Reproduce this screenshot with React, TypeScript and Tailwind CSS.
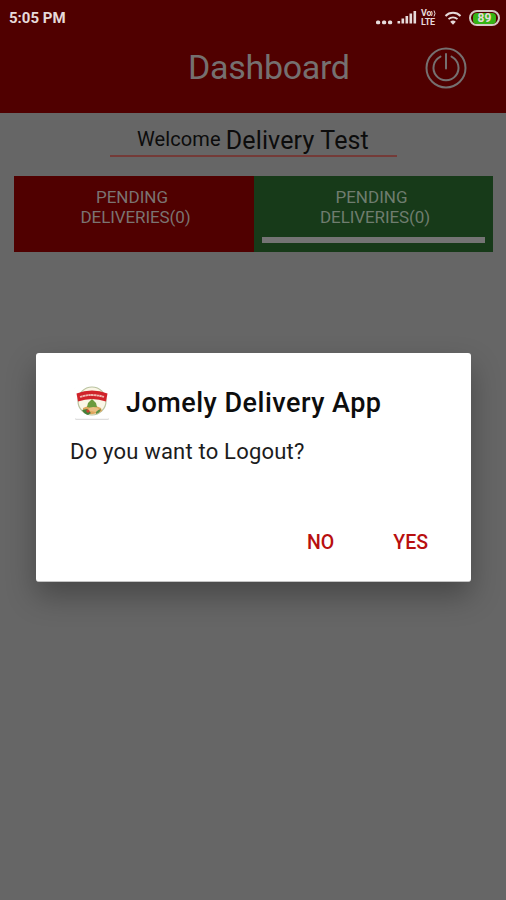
function StatusBar() {
  return (
    <div className="flex h-9 items-center justify-between pl-[9px] pr-[6px] text-[#e6dada]">
      <span className="text-[15px] font-bold leading-none">5:05 PM</span>
      <div className="flex items-center">
        <svg className="h-5 w-[46px]" viewBox="0 0 46 20" fill="currentColor" aria-hidden="true">
          <rect x="1" y="12.500" width="4.200" height="3.800" rx="1.500" />
          <rect x="7" y="12.500" width="4.200" height="3.800" rx="1.500" />
          <rect x="13" y="12.500" width="4.200" height="3.800" rx="1.500" />
          <rect x="22.500" y="13" width="2.600" height="2.500" />
          <rect x="26.500" y="10.500" width="2.600" height="5" />
          <rect x="30.500" y="8" width="2.600" height="7.500" />
          <rect x="34.500" y="5.500" width="2.600" height="10" />
          <rect x="38.500" y="3" width="2.600" height="12.500" />
        </svg>
        <div className="flex w-[19px] flex-col text-[9px] font-bold leading-[9px] tracking-[-0.2px]">
          <span className="flex items-center">
            Vo
            <svg className="h-[7px] w-[5px]" viewBox="0 0 5 7" fill="none" stroke="currentColor" aria-hidden="true">
              <path d="M.5 1q1.500 2.500 0 5M3 .5q2 3 0 6" />
            </svg>
          </span>
          <span>LTE</span>
        </div>
        <svg className="ml-[4px] h-4 w-[18px]" viewBox="0 0 18 16" fill="none" stroke="currentColor" aria-hidden="true">
          <path d="M1.500 6a10.500 10.500 0 0 1 15 0" strokeWidth="2" />
          <path d="M4.500 9.200a6.400 6.400 0 0 1 9 0" strokeWidth="1.800" />
          <path d="M9 14.800l-2.800-3a4 4 0 0 1 5.600 0z" fill="currentColor" stroke="none" />
        </svg>
        <div className="ml-[7px] flex h-4 w-[31px] items-center justify-center rounded-full border-2 border-[#d6c9c6]">
          <span className="flex h-[11px] w-[23px] items-center justify-center rounded-sm bg-[#35b514] text-[12px] font-bold leading-none">
            89
          </span>
        </div>
      </div>
    </div>
  );
}

function PowerIcon() {
  return (
    <svg className="h-[42px] w-[42px]" viewBox="0 0 42 42" fill="none" stroke="currentColor" strokeLinecap="round" aria-hidden="true">
      <circle cx="21" cy="21" r="19.500" strokeWidth="2" />
      <path d="M15.500 9.600a12.500 12.500 0 1 0 11 0" strokeWidth="2" />
      <path d="M21 7v14.500" strokeWidth="2" />
    </svg>
  );
}

function AppLogo() {
  return (
    <svg className="h-[36px] w-[36px]" viewBox="0 0 36 36" aria-hidden="true">
      <rect x="1" y="2" width="34" height="33" rx="1.500" fill="#dedede" />
      <rect x="1" y="1" width="34" height="32.800" rx="1.500" fill="#fff" />
      <circle cx="18" cy="16" r="14" fill="#faf6e6" stroke="#b9c3a0" strokeWidth="1.200" />
      <path d="M9 23q9-5 18 0l1 3q-9 6-19 1z" fill="#dfa75d" />
      <path d="M18 14l4 4 1 4-5 1-5-1 1-4z" fill="#6c9b3e" />
      <path d="M8 25l5-1 4 4-3 2q-4-1-6-5z" fill="#43803a" />
      <path d="M22 26l5-2q-1 4-5 5z" fill="#5a9145" />
      <circle cx="14" cy="26" r="1.700" fill="#c9442f" />
      <path d="M14 24q5-4 11 0l-3 3-6-1z" fill="#eabf83" />
      <path d="M2.500 8.500q15.500-6 31 0l-1.500 8q-14-5-28 0z" fill="#d0232a" />
      <path d="M6 12q12-4 24 0" fill="none" stroke="#f0b9b2" strokeWidth="1.800" strokeDasharray="2.500 .3" />
    </svg>
  );
}

export default function App() {
  return (
    <div className="relative h-[900px] w-[506px] overflow-hidden bg-[#666666] font-['Roboto',sans-serif]">
      <header className="h-[113px] bg-[#500000]">
        <StatusBar />
        <div className="flex h-[64px] items-center justify-between pl-[188px] pr-[39px] text-[#757070]">
          <h1 className="pb-[2px] text-[34px] leading-none tracking-[-0.3px]">Dashboard</h1>
          <PowerIcon />
        </div>
      </header>

      <div className="mx-auto flex h-[44px] w-[287px] items-start justify-center gap-[5px] border-b-2 border-[#743b38] pt-[9px] text-[#0c0c0c]">
        <span className="pt-[2px] text-[20px] leading-[30px] tracking-[0.1px]">Welcome</span>
        <span className="text-[25px] leading-[38px] tracking-[0.15px]">Delivery Test</span>
      </div>

      <div className="mx-[14px] mt-[19px] grid h-[76px] w-[479px] grid-cols-[240px_239px] text-center text-[17px] leading-[20px] text-[#7b7472]">
        <div className="bg-[#500000] pt-[11px]">
          <div className="pr-[4px]">PENDING</div>
          <div className="pl-[3px] tracking-[-0.1px]">DELIVERIES(0)</div>
        </div>
        <div className="bg-[#173a19] px-2 pt-[11px] text-[#6f7d6f]">
          <div className="pr-[4px]">PENDING</div>
          <div className="pl-[3px] tracking-[-0.1px]">DELIVERIES(0)</div>
          <div className="mt-[10px] h-[6px] bg-[#747474]" />
        </div>
      </div>

      <div
        role="dialog"
        className="absolute left-[36px] top-[353px] h-[229px] w-[435px] rounded-[3px] border-b border-[#c4c4c4] bg-white pl-[34px] pt-[32px] shadow-[0_14px_30px_rgba(0,0,0,0.3)]"
      >
        <div className="flex items-center gap-[16px] pl-[4px]">
          <AppLogo />
          <h2 className="text-[27px] font-medium leading-[36px] tracking-[0.48px] text-[#0d0d0d]">Jomely Delivery App</h2>
        </div>
        <p className="mt-[17px] text-[22px] leading-[28px] tracking-[0.2px] text-[#1c1c1c]">Do you want to Logout?</p>
        <div className="mt-[65px] flex justify-end gap-[59px] pr-[43px] text-[19.5px] font-medium leading-[24px] text-[#b80f0f]">
          <button>NO</button>
          <button>YES</button>
        </div>
      </div>
    </div>
  );
}
